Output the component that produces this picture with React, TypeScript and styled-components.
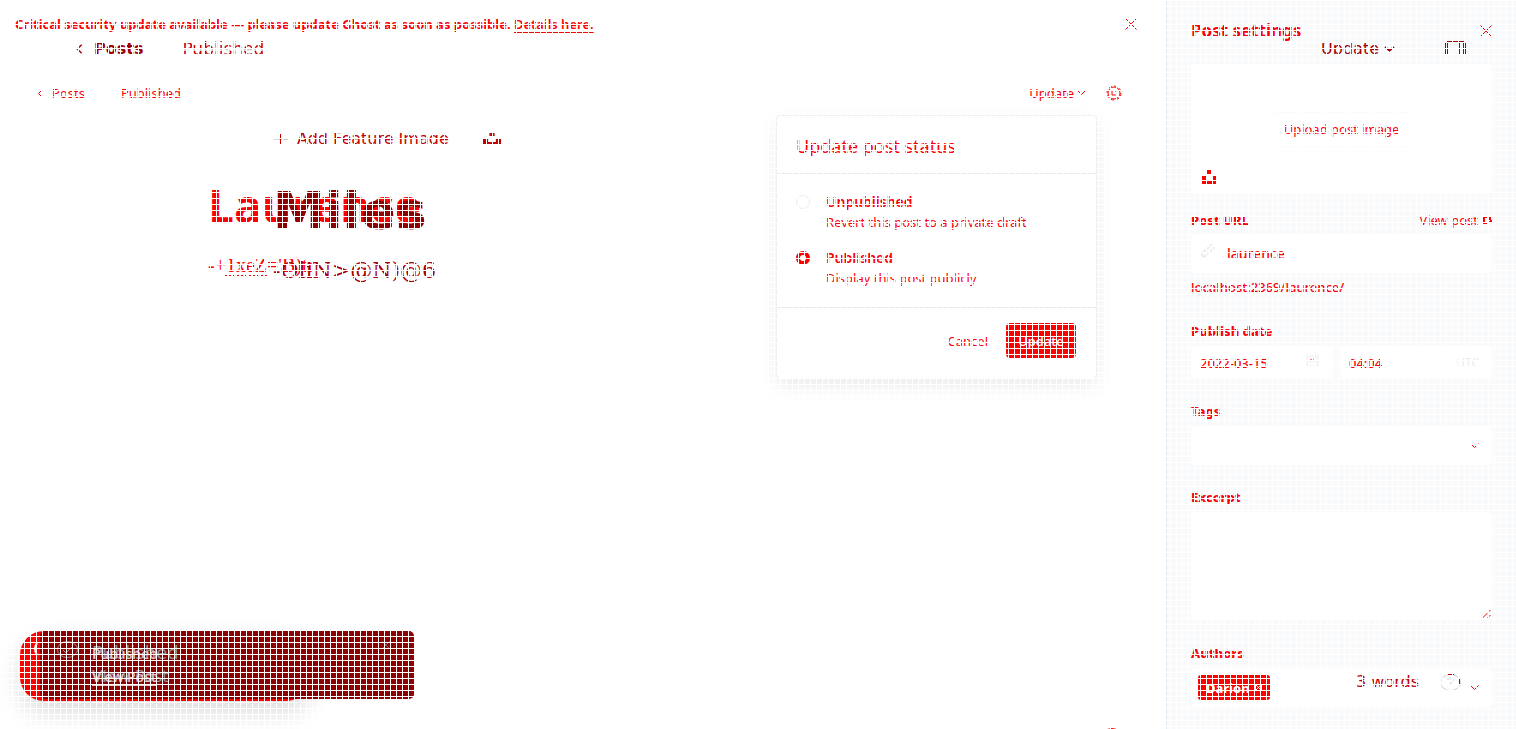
import React from 'react';
import styled, { createGlobalStyle, css } from 'styled-components';

const red = '#ff0000';
const dark = '#8b0000';

const Global = createGlobalStyle`
  * { box-sizing: border-box; }
  body {
    margin: 0;
    background: #fff;
    color: ${red};
    font-family: "Noto Sans", "Open Sans", sans-serif;
    font-size: 13px;
    line-height: 20px;
  }
  h1, h2, h3, p { margin: 0; font-weight: 400; }
  button, input, textarea, select { font: inherit; color: inherit; }
  a { color: inherit; }
`;

const Page = styled.div`
  position: relative;
  display: flex;
  min-height: 100vh;
  overflow: hidden;
`;

const Mesh = styled.div`
  position: absolute;
  inset: 0;
  z-index: 5;
  pointer-events: none;
  background:
    repeating-linear-gradient(90deg, #fff 0 1px, transparent 1px 6px),
    repeating-linear-gradient(180deg, #fff 0 1px, transparent 1px 6px);
`;

const Main = styled.main`
  position: relative;
  flex: 1;
  min-width: 0;
`;

const PlainButton = styled.button`
  display: inline-flex;
  align-items: center;
  gap: 3px;
  padding: 0;
  border: 0;
  background: none;
`;

const Banner = styled.div`
  display: flex;
  align-items: center;
  justify-content: space-between;
  height: 48px;
  padding: 0 29px 0 15px;
  font-weight: 700;
`;

const BannerLink = styled.a`
  font-weight: 600;
  text-decoration: underline;
  text-underline-offset: 3px;
`;

const NavBar = styled.nav`
  display: flex;
  align-items: center;
  height: 90px;
  padding: 0 44px 0 37px;
`;

const BackLink = styled.a`
  display: flex;
  align-items: center;
  gap: 9px;
  margin-right: 36px;
  text-decoration: none;
`;

const NavEnd = styled.div`
  display: flex;
  align-items: center;
  gap: 20px;
  margin-left: auto;
`;

const Editor = styled.section`
  padding: 40px 0 0 208px;
`;

const Title = styled.h1`
  font: 700 46px/54px "Open Sans", sans-serif;
`;

const Body = styled.p`
  margin-top: 18px;
  font: 20px/30px "Liberation Serif", serif;
`;

const Misspelt = styled.span`
  text-decoration: underline dotted 2px;
  text-underline-offset: 3px;
`;

const Modal = styled.form`
  position: absolute;
  top: 115px;
  right: 69px;
  width: 321px;
  border: 1px solid #eceef1;
  border-radius: 4px;
  background: #fff;
  box-shadow: 0 8px 20px rgba(0, 0, 0, 0.08);
`;

const ModalTitle = styled.h2`
  padding: 17px 19px 13px;
  border-bottom: 1px solid #e8eaee;
  font-size: 18px;
  line-height: 27px;
`;

const Options = styled.div`
  display: flex;
  flex-direction: column;
  gap: 16px;
  padding: 18px 19px 19px;
`;

const Option = styled.label`
  display: flex;
  align-items: flex-start;
  gap: 16px;
`;

const Radio = styled.input`
  appearance: none;
  width: 14px;
  height: 14px;
  margin: 3px 0 0;
  border: 1px solid #e8ebee;
  border-radius: 50%;
  &:checked { border: 4px solid ${red}; }
`;

const OptionText = styled.span`
  display: flex;
  flex-direction: column;
`;

const Strong = styled.strong`
  font-weight: 600;
  font-size: 14px;
`;

const ModalFooter = styled.div`
  display: flex;
  align-items: center;
  justify-content: flex-end;
  gap: 18px;
  padding: 15px 20px 20px;
  border-top: 1px solid #e8eaee;
`;

const Primary = styled.button`
  width: 70px;
  height: 35px;
  padding: 0;
  border: 0;
  border-radius: 4px;
  background: ${red};
  color: #fff;
  font-weight: 500;
`;

const HelpPeek = styled.button`
  position: absolute;
  right: 42px;
  bottom: -23px;
  width: 24px;
  height: 24px;
  border: 1px solid ${red};
  border-radius: 50%;
  background: none;
`;

const Aside = styled.aside`
  width: 350px;
  padding: 18px 24px;
  border-left: 1px solid #e3ecf3;
  background: #f9fafc;
`;

const AsideHead = styled.div`
  display: flex;
  align-items: center;
  justify-content: space-between;
  height: 26px;
  margin-bottom: 20px;
`;

const AsideTitle = styled.h2`
  font-weight: 700;
  font-size: 17px;
  line-height: 26px;
`;

const surface = css`
  border: 1px solid #fff;
  border-radius: 4px;
  background: #fff;
`;

const Upload = styled.div`
  ${surface}
  position: relative;
  display: flex;
  align-items: center;
  justify-content: center;
  height: 130px;
`;

const UploadButton = styled.button`
  width: 139px;
  height: 35px;
  padding: 0;
  border: 1px solid #fafbfb;
  border-radius: 5px;
  background: #fff;
`;

const Corner = styled.span`
  position: absolute;
  left: 10px;
  bottom: 9px;
  display: flex;
`;

const LabelRow = styled.div<{ $gap: number }>`
  display: flex;
  justify-content: space-between;
  align-items: center;
  height: 20px;
  margin: ${p => p.$gap}px 0 5px;
`;

const Label = styled.label`
  font-weight: 800;
`;

const ViewLink = styled.a`
  display: flex;
  align-items: center;
  gap: 5px;
  text-decoration: none;
`;

const Field = styled.div<{ $height: number }>`
  ${surface}
  display: flex;
  flex: 1;
  align-items: center;
  gap: 12px;
  min-width: 0;
  height: ${p => p.$height}px;
  padding: 0 12px 0 8px;
`;

const Input = styled.input`
  flex: 1;
  min-width: 0;
  padding: 0;
  border: 0;
  background: none;
  outline: 0;
  font-weight: 500;
`;

const SlugInput = styled(Input)`
  font-size: 14px;
`;

const Select = styled.select`
  appearance: none;
  flex: 1;
  min-width: 0;
  border: 0;
  background: none;
`;

const Faint = styled.span`
  color: #e8ecef;
  font-size: 12px;
`;

const Hint = styled.p`
  margin-top: 4px;
  font-weight: 500;
`;

const Pair = styled.div`
  display: grid;
  grid-template-columns: 141px 1fr;
  gap: 8px;
`;

const Area = styled.textarea`
  ${surface}
  display: block;
  width: 100%;
  height: 108px;
  resize: none;
`;

const AreaWrap = styled.div`
  position: relative;
`;

const Grip = styled.span`
  position: absolute;
  right: 1px;
  bottom: 1px;
  display: flex;
`;

const Chip = styled.button`
  display: flex;
  align-items: center;
  gap: 5px;
  height: 25px;
  margin-right: auto;
  padding: 0 8px;
  border: 0;
  border-radius: 3px;
  background: ${red};
  color: #fff;
  font-weight: 700;
  margin-left: -2px;
`;

/* Earlier revision of the editor, laid over the current one. */
const Layer = styled.div`
  position: absolute;
  inset: 0;
  pointer-events: none;
  color: #a00000;
  font: 16px/24px "DejaVu Sans", sans-serif;
`;

const LayerNav = styled.div`
  display: flex;
  align-items: center;
  height: 24px;
  margin-top: 37px;
  padding: 0 50px 0 75px;
  clip-path: inset(0 0 7px 0);
`;

const LayerBack = styled.b`
  display: flex;
  align-items: center;
  gap: 10px;
  margin-right: 39px;
`;

const LayerStatus = styled.span`
  font-size: 17px;
  background: linear-gradient(#d00000 0 50%, #c8c8c8 50% 60%, #d00000 60%);
  background-clip: text;
  color: transparent;
`;

const LayerEnd = styled.span`
  display: flex;
  align-items: center;
  gap: 5px;
  margin-left: auto;
  margin-right: 50px;
`;

const Feature = styled.div`
  display: flex;
  align-items: center;
  height: 24px;
  margin: 66px 0 0 273px;
  color: #c40000;
  clip-path: inset(0 0 7px 0);
`;

const FeatureText = styled.span`
  margin: 0 34px 0 8px;
`;

const LayerTitle = styled.h1`
  margin: 30px 0 0 273px;
  color: ${dark};
  font: 700 52px/60px "DejaVu Sans", sans-serif;
`;

const LayerBody = styled.p`
  margin: 15px 0 0 273px;
  color: #a80000;
  font: 22px/30px "DejaVu Serif", serif;
`;

const LayerWords = styled.div`
  position: absolute;
  right: 55px;
  bottom: 35px;
  display: flex;
  align-items: center;
  gap: 21px;
  color: #c00000;
`;

const Toast = styled.div<{ $old?: boolean }>`
  position: absolute;
  left: ${p => (p.$old ? 40 : 20)}px;
  bottom: ${p => (p.$old ? 30 : 28)}px;
  width: ${p => (p.$old ? 374 : 290)}px;
  height: ${p => (p.$old ? 68 : 70)}px;
  padding: 10px 24px 0 ${p => (p.$old ? 17 : 13)}px;
  display: flex;
  align-items: flex-start;
  gap: 14px;
  border-radius: ${p => (p.$old ? 5 : 24)}px;
  background: ${p => (p.$old ? dark : red)};
  box-shadow: ${p => (p.$old ? 'none' : '0 12px 26px rgba(0, 0, 0, 0.14)')};
  color: ${p => (p.$old ? '#8f9696' : '#f4f4f4')};
`;

const ToastCopy = styled.div`
  display: flex;
  flex: 1;
  flex-direction: column;
`;

const ToastHeading = styled.span`
  font-size: 18px;
`;

const ToastWords = styled.div`
  position: absolute;
  left: 92px;
  bottom: 42px;
  display: flex;
  flex-direction: column;
  gap: 2px;
  color: #e8c8c8;
  font: 500 14px/21px "Noto Sans", sans-serif;
`;

const ToastLink = styled.a`
  text-decoration: underline 1px;
  text-underline-offset: 3px;
`;

const Svg = ({ w, h, box, children, stroke = 1 }: { w: number; h: number; box?: string; children: React.ReactNode; stroke?: number }) => (
  <svg width={w} height={h} viewBox={box ?? `0 0 ${w} ${h}`} fill="none" stroke="currentColor" strokeWidth={stroke} aria-hidden="true">
    {children}
  </svg>
);
const Cross = ({ size = 12 }: { size?: number }) => <Svg w={size} h={size} box="0 0 12 12"><path d="M.5 .5 11.5 11.5M11.5 .5 .5 11.5" /></Svg>;
const Down = () => <Svg w={9} h={6}><path d="M.5 .5 4.5 4.5 8.5 .5" /></Svg>;
const Left = ({ big }: { big?: boolean }) => <Svg w={big ? 9 : 6} h={big ? 10 : 7} box="0 0 6 7"><path d="M4.5 .5 1.5 3.5 4.5 6.5" /></Svg>;
const Unsplash = ({ wide }: { wide?: boolean }) => (
  <svg width={wide ? 18 : 14} height="14" viewBox="0 0 14 14" preserveAspectRatio="none" aria-hidden="true">
    <path fill="currentColor" d="M5 0h4v4H5zM0 6h4v4h6V6h4v8H0z" />
  </svg>
);
const Gear = () => (
  <Svg w={16} h={16}>
    <circle cx="8" cy="8" r="6" />
    <circle cx="8" cy="8" r="7" strokeDasharray="3 2.5" />
    <path d="M6 5v5h4M9 6h2" />
  </Svg>
);

export default function App() {
  return (
    <Page>
      <Global />
      <Main>
        <Banner>
          <span>Critical security update available — please update Ghost as soon as possible. <BannerLink href="#details">Details here.</BannerLink></span>
          <PlainButton aria-label="Dismiss"><Cross /></PlainButton>
        </Banner>
        <NavBar>
          <BackLink href="#posts"><Left />Posts</BackLink>
          <span>Published</span>
          <NavEnd>
            <PlainButton>Update <Down /></PlainButton>
            <PlainButton aria-label="Settings"><Gear /></PlainButton>
          </NavEnd>
        </NavBar>
        <Editor>
          <Title>Laurence</Title>
          <Body>-+<Misspelt>1xeZ</Misspelt>='B)tr</Body>
        </Editor>
        <Modal>
          <ModalTitle>Update post status</ModalTitle>
          <Options>
            <Option>
              <Radio type="radio" name="status" />
              <OptionText><Strong>Unpublished</Strong><span>Revert this post to a private draft</span></OptionText>
            </Option>
            <Option>
              <Radio type="radio" name="status" defaultChecked />
              <OptionText><Strong>Published</Strong><span>Display this post publicly</span></OptionText>
            </Option>
          </Options>
          <ModalFooter>
            <PlainButton type="button">Cancel</PlainButton>
            <Primary type="button">Update</Primary>
          </ModalFooter>
        </Modal>
        <HelpPeek aria-label="Help" />
      </Main>
      <Aside>
        <AsideHead>
          <AsideTitle>Post settings</AsideTitle>
          <PlainButton aria-label="Close settings"><Cross /></PlainButton>
        </AsideHead>
        <Upload>
          <UploadButton>Upload post image</UploadButton>
          <Corner><Unsplash /></Corner>
        </Upload>
        <LabelRow $gap={16}>
          <Label htmlFor="url">Post URL</Label>
          <ViewLink href="#view-post">View post <Svg w={9} h={8}><path strokeWidth="2" d="M4 1H1v6h3M5 3h3M5 6h3V4M7 0v3" /></Svg></ViewLink>
        </LabelRow>
        <Field $height={38}>
          <Faint><Svg w={15} h={14}><path strokeWidth="2" d="M1 11 5 6l3 3-4 4zM7 5l4-4 3 3-4 4" /></Svg></Faint>
          <SlugInput id="url" defaultValue="laurence" />
        </Field>
        <Hint>localhost:2369/laurence/</Hint>
        <LabelRow $gap={24}><Label htmlFor="date">Publish date</Label></LabelRow>
        <Pair>
          <Field $height={33}>
            <Input id="date" defaultValue="2022-03-15" />
            <Faint><Svg w={13} h={14}><path d="M1 2h11v11H1zM1 5h11M4 0v3M9 0v3M1 9h11" /><path stroke="#ff0000" d="M4 7h2M7 7h2" /></Svg></Faint>
          </Field>
          <Field $height={33}>
            <Input aria-label="Publish time" defaultValue="04:04" />
            <Faint>UTC</Faint>
          </Field>
        </Pair>
        <LabelRow $gap={22}><Label htmlFor="tags">Tags</Label></LabelRow>
        <Field $height={39}><Select id="tags" /><Down /></Field>
        <LabelRow $gap={22}><Label htmlFor="excerpt">Excerpt</Label></LabelRow>
        <AreaWrap>
          <Area id="excerpt" />
          <Grip><Svg w={9} h={9}><path d="M0 8.5 8.5 0M5 8.5 8.5 5" /></Svg></Grip>
        </AreaWrap>
        <LabelRow $gap={23}><Label as="span">Authors</Label></LabelRow>
        <Field $height={39}>
          <Chip>Darion <Svg w={7} h={7}><path d="M1 1 6 6M6 1 1 6M.5 .5h6v6h-6z" /></Svg></Chip>
          <Down />
        </Field>
      </Aside>

      <Layer>
        <LayerNav>
          <LayerBack><Left big />Posts</LayerBack>
          <LayerStatus>Published</LayerStatus>
          <LayerEnd>Update <Svg w={11} h={6}><path d="M1 1 5.5 4.5 10 1" strokeWidth="2" /></Svg></LayerEnd>
          <Svg w={21} h={16}><path d="M.5 16V2M2.5 16V2M2 .5h17M18.5 16V2M20.5 16V2M14.5 16V2" /></Svg>
        </LayerNav>
        <Feature>
          <Svg w={16} h={12}><path stroke="#ccc" d="M1 6.5h14" /><path d="M7.5 1v11" /></Svg>
          <FeatureText>Add Feature Image</FeatureText>
          <Unsplash wide />
        </Feature>
        <LayerTitle>Miles</LayerTitle>
        <LayerBody>-OliN&gt;@N)@6</LayerBody>
        <LayerWords>
          3 words
          <Svg w={21} h={17}><ellipse cx="10.5" cy="8.5" rx="10" ry="8" stroke="#ccc" /><path stroke="#ccc" d="M7.500 6q3-4 6 0-1 3-3 3v2" /><path d="M8 .5h6M8 16.500h6M19.500 5v5" /></Svg>
        </LayerWords>
        <Toast>
          <Svg w={5} h={16}><path strokeWidth="2" d="M4 2Q0 8 4 14" /></Svg>
        </Toast>
        <Toast $old>
          <Svg w={21} h={17}><ellipse cx="10.5" cy="8.5" rx="10" ry="8" /><path d="M6 9l3 3 6-6" /></Svg>
          <ToastCopy>
            <ToastHeading>Published</ToastHeading>
            <span>View Post</span>
          </ToastCopy>
          <Cross size={8} />
        </Toast>
        <ToastWords>
          <span>Published</span>
          <ToastLink href="#view">View Post</ToastLink>
        </ToastWords>
      </Layer>
      <Mesh />
    </Page>
  );
}
